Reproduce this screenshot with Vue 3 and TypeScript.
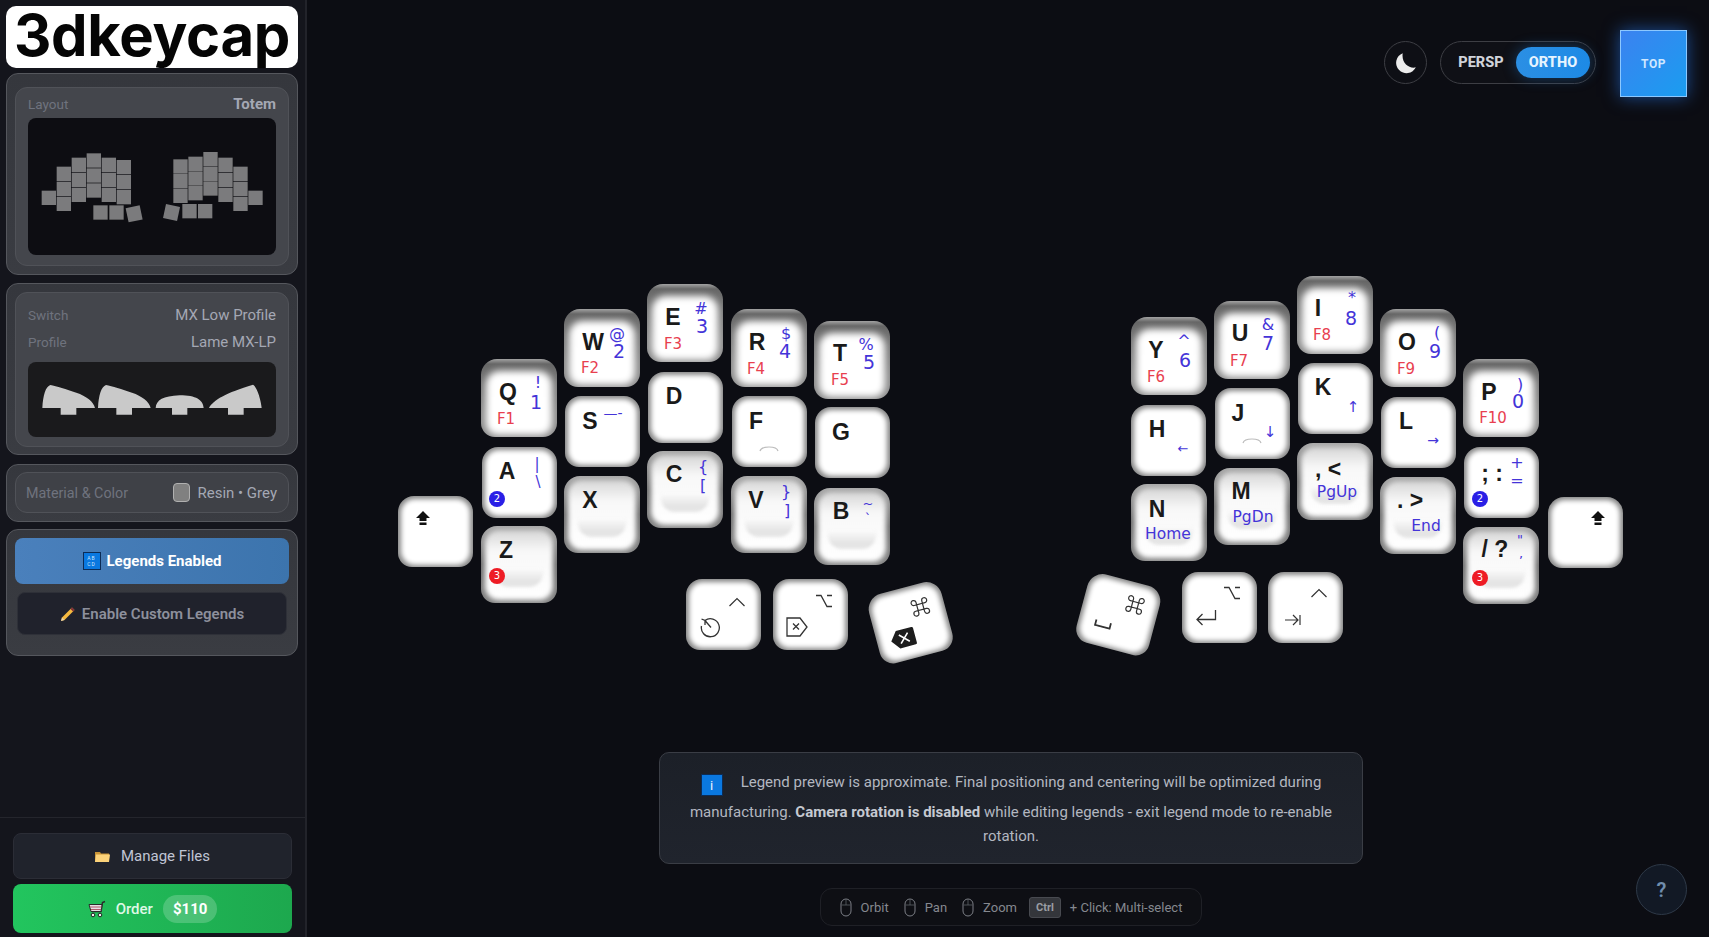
<script setup lang="ts">
type Legend = { t?: string, x: number, y: number, s?: number, c?: 'blue' | 'red' | 'black', b?: boolean, badge?: string, icon?: string }
type Key = { x: number, y: number, w: number, h: number, kind: string, rot?: number, legends: Legend[] }

// page coords for everything on the board, legends get converted to key-local below
const top = (x: number, y: number, main: [string, number, number], sym: [string, number, number], num: [string, number, number], f: [string, number, number]): Key => ({
  x, y, w: 76, h: 78, kind: 'top',
  legends: [
    { t: main[0], x: main[1], y: main[2], s: 23, b: true },
    { t: sym[0], x: sym[1], y: sym[2], s: 16, c: 'blue' },
    { t: num[0], x: num[1], y: num[2], s: 19, c: 'blue' },
    { t: f[0], x: f[1], y: f[2], s: 15, c: 'red' },
  ],
})
const mid = (x: number, y: number, legends: Legend[]): Key => ({ x, y, w: 75, h: 71, kind: 'mid', legends })
const bot = (x: number, y: number, legends: Legend[]): Key => ({ x, y, w: 76, h: 77, kind: 'bot', legends })
const main = (t: string, x: number, y: number): Legend => ({ t, x, y, s: 23, b: true })
const sub = (t: string, x: number, y: number, s = 15): Legend => ({ t, x, y, s, c: 'blue' })

const keys: Key[] = [
  mid(398, 496, [{ icon: 'shift', x: 423, y: 518 }]),
  top(481, 359, ['Q', 508, 392], ['!', 538, 383], ['1', 536, 402], ['F1', 506, 419]),
  mid(482, 447, [main('A', 507, 471), sub('|', 537, 464, 15), sub('\\', 538, 482, 15), { badge: '2', x: 497, y: 499 }]),
  bot(481, 526, [main('Z', 506, 550), { badge: '3', x: 497, y: 576 }]),
  top(564, 309, ['W', 593, 342], ['@', 617, 334], ['2', 619, 351], ['F2', 590, 368]),
  mid(565, 396, [main('S', 590, 421), sub('—-', 613, 413, 14)]),
  bot(564, 476, [main('X', 590, 500)]),
  top(647, 284, ['E', 673, 317], ['#', 701, 309], ['3', 702, 326], ['F3', 673, 344]),
  mid(648, 372, [main('D', 674, 396)]),
  bot(647, 451, [main('C', 674, 474), sub('{', 703, 467, 16), sub('[', 703, 486, 16)]),
  top(731, 309, ['R', 757, 342], ['$', 786, 334], ['4', 785, 351], ['F4', 756, 369]),
  mid(732, 396, [main('F', 756, 421), { icon: 'bump', x: 769, y: 449 }]),
  bot(731, 476, [main('V', 756, 500), sub('}', 786, 492, 16), sub(']', 787, 511, 16)]),
  top(814, 321, ['T', 840, 353], ['%', 866, 345], ['5', 869, 362], ['F5', 840, 380]),
  mid(815, 407, [main('G', 841, 432)]),
  bot(814, 488, [main('B', 841, 511), sub('~', 868, 503, 13), sub('`', 868, 518, 13)]),
  mid(686, 579, [{ icon: 'ctrl', x: 737, y: 602 }, { icon: 'undo', x: 710, y: 627 }]),
  mid(773, 579, [{ icon: 'opt', x: 824, y: 601 }, { icon: 'del', x: 797, y: 627 }]),
  { ...mid(873, 587, [{ icon: 'cmd', x: 920, y: 607 }, { icon: 'delfill', x: 903, y: 638 }]), rot: -15 },

  { ...mid(1081, 579, [{ icon: 'cmd', x: 1135, y: 605 }, { icon: 'space', x: 1103, y: 624 }]), rot: 15 },
  mid(1182, 572, [{ icon: 'opt', x: 1232, y: 593 }, { icon: 'enter', x: 1206, y: 618 }]),
  mid(1268, 572, [{ icon: 'ctrl', x: 1319, y: 593 }, { icon: 'tab', x: 1293, y: 620 }]),
  top(1131, 317, ['Y', 1156, 350], ['^', 1184, 341], ['6', 1185, 360], ['F6', 1156, 377]),
  mid(1131, 405, [main('H', 1157, 429), sub('←', 1183, 448, 13)]),
  bot(1131, 484, [main('N', 1157, 509), sub('Home', 1168, 535, 15.5)]),
  top(1214, 301, ['U', 1240, 333], ['&', 1268, 325], ['7', 1268, 343], ['F7', 1239, 361]),
  mid(1215, 388, [main('J', 1238, 413), sub('↓', 1270, 432, 15), { icon: 'bump', x: 1252, y: 441 }]),
  bot(1214, 468, [main('M', 1241, 491), sub('PgDn', 1253, 518, 15.5)]),
  top(1297, 276, ['I', 1318, 308], ['*', 1352, 298], ['8', 1351, 318], ['F8', 1322, 335]),
  mid(1298, 363, [main('K', 1323, 387), sub('↑', 1353, 407, 15)]),
  bot(1297, 443, [main(', <', 1328, 469), sub('PgUp', 1337, 493, 15.5)]),
  top(1380, 309, ['O', 1407, 342], ['(', 1437, 333], ['9', 1435, 351], ['F9', 1406, 369]),
  mid(1381, 397, [main('L', 1406, 421), sub('→', 1433, 440, 14)]),
  bot(1380, 477, [main('. >', 1410, 500), sub('End', 1426, 527, 15.5)]),
  top(1463, 359, ['P', 1489, 392], [')', 1520, 385], ['0', 1518, 401], ['F10', 1493, 418]),
  mid(1464, 447, [main('; :', 1492, 473), sub('+', 1517, 463, 16), sub('=', 1517, 481, 16), { badge: '2', x: 1480, y: 499 }]),
  bot(1463, 527, [main('/ ?', 1495, 549), sub('"', 1520, 539, 13), sub(',', 1521, 553, 13), { badge: '3', x: 1480, y: 578 }]),
  mid(1548, 497, [{ icon: 'shift', x: 1598, y: 518 }]),
]

// rotated keys: legends were measured on the page, so undo the rotation around the key centre
const legendStyle = (k: Key, l: Legend) => {
  let dx = l.x - (k.x + k.w / 2)
  let dy = l.y - (k.y + k.h / 2)
  if (k.rot) {
    const a = -k.rot * Math.PI / 180
    const nx = dx * Math.cos(a) - dy * Math.sin(a)
    dy = dx * Math.sin(a) + dy * Math.cos(a)
    dx = nx
  }
  return { left: `${k.w / 2 + dx}px`, top: `${k.h / 2 + dy}px`, fontSize: l.s ? `${l.s}px` : undefined }
}

const keyStyle = (k: Key) => ({
  left: `${k.x}px`, top: `${k.y}px`, width: `${k.w}px`, height: `${k.h}px`,
  transform: k.rot ? `rotate(${k.rot}deg)` : undefined,
})

// mini layout, measured at 3x
const miniCols: [number, number[]][] = [
  [125, [572]], [170, [500, 545, 590]], [215, [473, 518, 563]], [260, [460, 505, 550]], [305, [473, 518, 563]], [350, [480, 525, 570]],
  [520, [478, 522, 566]], [565, [470, 514, 558]], [610, [456, 500, 544]], [655, [473, 518, 563]], [700, [500, 545, 590]], [745, [572]],
  [280, [616]], [328, [616]], [547, [612]], [594, [612]],
]
const miniRects = miniCols.flatMap(([x, ys]) => ys.map(y => ({ x, y })))

const hints = ['Orbit', 'Pan', 'Zoom']
</script>

<template>
  <div class="app">
    <aside class="sidebar">
      <div class="top-area">
        <div class="logo">3dkeycap</div>

        <section class="panel layout-panel">
          <div class="inner">
            <div class="row"><span class="label">Layout</span><span class="value strong">Totem</span></div>
            <div class="preview dark">
              <svg width="248" height="137" viewBox="84 354 744 411">
                <rect v-for="r in miniRects" :key="`${r.x}-${r.y}`" :x="r.x" :y="r.y" width="43" height="43" fill="#7b7b7d" />
                <rect x="381" y="620" width="43" height="43" fill="#7b7b7d" transform="rotate(-12 403 642)" />
                <rect x="493" y="616" width="43" height="43" fill="#7b7b7d" transform="rotate(12 514 638)" />
              </svg>
            </div>
          </div>
        </section>

        <section class="panel profile-panel">
          <div class="inner">
            <div class="row"><span class="label">Switch</span><span class="value">MX Low Profile</span></div>
            <div class="row second"><span class="label">Profile</span><span class="value">Lame MX-LP</span></div>
            <div class="preview profile">
              <svg width="248" height="75" viewBox="25 36 744 225">
                <g fill="#c9c9c9">
                  <path d="M68 174C70 135 78 110 92 105C110 108 140 118 170 128C200 138 222 155 226 174H170V194H123V174Z" />
                  <path d="M235 174C237 135 245 110 259 105C277 108 307 118 337 128C367 138 389 155 393 174H337V194H290V174Z" />
                  <path d="M408 174C410 150 430 138 480 136C530 136 550 150 552 174H503V194H457V174Z" />
                  <path d="M568 174C580 150 620 128 700 104C712 110 724 150 726 174H672V194H625V174Z" />
                </g>
              </svg>
            </div>
          </div>
        </section>

        <section class="panel material-panel">
          <div class="inner slim">
            <span class="label mat-label">Material &amp; Color</span>
            <span class="material"><i class="swatch"></i>Resin • Grey</span>
          </div>
        </section>

        <section class="panel legends-panel">
          <button class="btn-blue">
            <span class="abcd"><b>AB</b><b>CD</b></span>Legends Enabled
          </button>
          <button class="btn-dark">
            <svg width="16" height="16" viewBox="0 0 16 16">
              <path d="M12 1.5l2.5 2.5L4.5 14 1 15l1-3.5z" fill="#f5b93f" />
              <path d="M12 1.5l2.5 2.5-1.5 1.5L10.500 3z" fill="#7a2b3a" />
              <path d="M1 15l1-3.500 2.500 2.500z" fill="#e8d5b0" />
            </svg>
            Enable Custom Legends
          </button>
        </section>
      </div>

      <div class="footer">
        <button class="btn-files">
          <svg width="15" height="13" viewBox="0 0 15 13">
            <path d="M0 2h5l1 1.500h8v8.500H0z" fill="#c99436" />
            <path d="M1 4.500h14l-1 7.500H0z" fill="#fbd27a" />
          </svg>
          Manage Files
        </button>
        <button class="btn-order">
          <svg width="18" height="18" viewBox="0 0 18 18">
            <path d="M17 1.500l-2.500 1-1.500 9H4" fill="none" stroke="#2b2b2b" stroke-width="1.500" />
            <path d="M1 4.500h13l-1 7H3z" fill="#e6dfe6" stroke="#2b2b2b" />
            <path d="M2 7h11.500M3 9.500h10" stroke="#b05a6a" stroke-width="1" />
            <circle cx="5" cy="15" r="1.800" fill="#eee" stroke="#222" />
            <circle cx="12" cy="15" r="1.800" fill="#eee" stroke="#222" />
          </svg>
          <span>Order</span>
          <span class="price">$110</span>
        </button>
      </div>
    </aside>

    <main class="stage">
      <div class="board">
        <div v-for="(k, i) in keys" :key="i" class="key" :class="k.kind" :style="keyStyle(k)">
          <i v-if="k.kind === 'bot'" class="dish"></i>
          <template v-for="(l, j) in k.legends" :key="j">
            <span v-if="l.t" class="legend" :class="[l.c || 'black', { bold: l.b }]" :style="legendStyle(k, l)">{{ l.t }}</span>
            <span v-else-if="l.badge" class="legend badge" :class="l.badge === '2' ? 'b2' : 'b3'" :style="legendStyle(k, l)">{{ l.badge }}</span>
            <span v-else class="legend" :style="legendStyle(k, l)">
              <svg v-if="l.icon === 'shift'" width="16" height="16" viewBox="0 0 16 16"><path d="M8 1l7 7h-3.500v3h-7V8H1z" fill="#111" /><rect x="4.500" y="12.500" width="7" height="2.500" fill="#111" /></svg>
              <svg v-else-if="l.icon === 'bump'" width="20" height="6" viewBox="0 0 20 6"><path d="M1 5Q2 1 10 1T19 5" fill="none" stroke="#bdbdbd" stroke-width="1.200" /></svg>
              <svg v-else-if="l.icon === 'ctrl'" width="18" height="10" viewBox="0 0 18 10"><path d="M1.500 9L9 1.500 16.500 9" fill="none" stroke="#333" stroke-width="1.200" /></svg>
              <svg v-else-if="l.icon === 'opt'" width="18" height="14" viewBox="0 0 18 14"><path d="M1 1.500h5L12 12.500h5M12 1.500h5" fill="none" stroke="#333" stroke-width="1.300" /></svg>
              <svg v-else-if="l.icon === 'undo'" width="22" height="22" viewBox="0 0 22 22"><path d="M6 4.500a9 9 0 1 1-3.500 5.500M2.500 3l3.500 1.500V9M6 4.500l6 7" fill="none" stroke="#333" stroke-width="1.300" /></svg>
              <svg v-else-if="l.icon === 'del'" width="24" height="22" viewBox="0 0 24 22"><path d="M2 2h13l7 9-7 9H2zM8 7.500l6 6M14 7.500l-6 6" fill="none" stroke="#333" stroke-width="1.300" /></svg>
              <svg v-else-if="l.icon === 'cmd'" width="20" height="20" viewBox="0 0 20 20"><path d="M7 7h6v6H7zM7 7H4.500A2.500 2.500 0 1 1 7 4.500zM13 7V4.500A2.500 2.500 0 1 1 15.500 7zM13 13h2.500A2.500 2.500 0 1 1 13 15.500zM7 13v2.500A2.500 2.500 0 1 1 4.500 13z" fill="none" stroke="#333" stroke-width="1.200" /></svg>
              <svg v-else-if="l.icon === 'delfill'" width="28" height="22" viewBox="0 0 28 22"><path d="M2 11L9 2H25a1.500 1.500 0 0 1 1.500 1.500V18.500A1.500 1.500 0 0 1 25 20H9z" fill="#1d1d1d" /><path d="M11 6.500l9 9M20 6.500l-9 9" stroke="#fff" stroke-width="1.600" /></svg>
              <svg v-else-if="l.icon === 'space'" width="18" height="8" viewBox="0 0 18 8"><path d="M1.500 1v5.500h15V1" fill="none" stroke="#333" stroke-width="1.800" /></svg>
              <svg v-else-if="l.icon === 'enter'" width="22" height="18" viewBox="0 0 22 18"><path d="M20.500 1v9.500H2M7.500 5l-5.500 5.500L7.500 16" fill="none" stroke="#333" stroke-width="1.300" /></svg>
              <svg v-else-if="l.icon === 'tab'" width="16" height="12" viewBox="0 0 16 12"><path d="M0 6h13M8 1l5 5-5 5M15 1v10" fill="none" stroke="#333" stroke-width="1.200" /></svg>
            </span>
          </template>
        </div>
      </div>

      <div class="top-tools">
        <button class="moon">
          <svg width="24" height="24" viewBox="0 0 22 22"><path d="M8 2A9.500 9.500 0 1 0 20 15C14 16.500 6.500 11 8 2z" fill="#ececec" /></svg>
        </button>
        <div class="cam">
          <span class="cam-item">PERSP</span>
          <span class="cam-item on">ORTHO</span>
        </div>
        <button class="view-top">TOP</button>
      </div>

      <div class="info">
        <span class="info-i">i</span>Legend preview is approximate. Final positioning and centering will be optimized during manufacturing. <strong>Camera rotation is disabled</strong> while editing legends - exit legend mode to re-enable rotation.
      </div>

      <div class="hints">
        <span v-for="h in hints" :key="h" class="hint">
          <svg width="12" height="19" viewBox="0 0 12 19"><rect x="1" y="1" width="10" height="17" rx="5" fill="none" stroke="#7c7f86" /><path d="M1.500 7H10.500M6 1v6" stroke="#5c5f66" stroke-width=".8" /></svg>
          {{ h }}
        </span>
        <kbd>Ctrl</kbd>
        <span>+ Click: Multi-select</span>
      </div>

      <button class="help">?</button>
    </main>
  </div>
</template>

<style scoped>
.app {
  display: flex;
  width: 1709px;
  height: 937px;
  overflow: hidden;
  font-family: Roboto, "Liberation Sans", sans-serif;
  background: #0c0d13;
}
.sidebar {
  width: 307px;
  box-sizing: border-box;
  flex: none;
  display: flex;
  flex-direction: column;
  justify-content: space-between;
  background: #14151c;
  border-right: 2px solid #22232a;
}
.top-area {
  display: flex;
  flex-direction: column;
  padding: 6px 7px 0 6px;
  gap: 8px;
}
.logo {
  height: 62px;
  background: #fff;
  border-radius: 10px;
  color: #050505;
  font: 700 58px/58px Inter, sans-serif;
  text-align: center;
  letter-spacing: -0.3px;
  margin-bottom: -3px;
}
.panel {
  box-sizing: border-box;
  background: linear-gradient(180deg, #35373d, #3a3c42);
  border: 1px solid #55575d;
  border-radius: 12px;
  padding: 8px;
}
.inner {
  box-sizing: border-box;
  background: #44464c;
  border: 1px solid #505258;
  border-radius: 12px;
  padding: 8px 12px;
}
.layout-panel { height: 202px; padding: 13px 8px 8px; }
.profile-panel { height: 172px; }
.material-panel { height: 58px; margin-top: 1px; padding-top: 7px; }
.legends-panel { margin-top: -1px; }
.layout-panel .inner { height: 179px; }
.profile-panel .inner { height: 155px; padding-top: 13px; }
.row {
  display: flex;
  justify-content: space-between;
  align-items: center;
  height: 16px;
}
.profile-panel .row { height: 18px; }
.row.second { margin-top: 9px; }
.label {
  color: #6f737e;
  font-size: 13.500px;
}
.mat-label { font-size: 14.300px; }
.value {
  color: #a4a8b4;
  font-size: 15px;
}
.value.strong { font-weight: 700; }
.preview {
  border-radius: 8px;
  overflow: hidden;
  display: block;
}
.preview svg { display: block; }
.preview.dark { background: #0d0d12; height: 137px; margin-top: 6px; }
.preview.profile { background: #1a1a1c; height: 75px; margin-top: 11px; }
.inner.slim {
  height: 41px;
  padding: 0 11px 0 10px;
  display: flex;
  justify-content: space-between;
  align-items: center;
  background: #3f4147;
}
.material {
  display: flex;
  align-items: center;
  gap: 8px;
  color: #a4a8b4;
  font-size: 15px;
}
.swatch {
  width: 17px;
  height: 19px;
  box-sizing: border-box;
  background: #808080;
  border: 1px solid #b0b0b0;
  border-radius: 4px;
}
.legends-panel {
  height: 127px;
  display: flex;
  flex-direction: column;
  padding: 8px;
}
button {
  font-family: inherit;
  border: 0;
  cursor: pointer;
}
.btn-blue {
  height: 46px;
  flex: none;
  display: flex;
  justify-content: center;
  align-items: center;
  gap: 6px;
  background: linear-gradient(90deg, #4a80bc, #3c74ad);
  border-radius: 8px;
  color: #fff;
  font-size: 15px;
  font-weight: 700;
}
.abcd {
  width: 16px;
  height: 16px;
  background: #0a78e0;
  border: 1px solid #0c2c56;
  display: grid;
  place-content: center;
  line-height: 6px;
}
.abcd b {
  display: block;
  font-size: 5px;
  font-weight: 400;
  letter-spacing: 1px;
  color: #cfe6ff;
}
.btn-dark {
  height: 43px;
  flex: none;
  margin: 8px 2px 0;
  display: flex;
  justify-content: center;
  align-items: center;
  gap: 6px;
  background: #20222c;
  border: 1px solid #2e3038;
  border-radius: 8px;
  color: #8d909c;
  font-size: 15px;
  font-weight: 600;
}
.footer {
  border-top: 1px solid #24252c;
  padding: 15px 13px 4px;
  display: flex;
  flex-direction: column;
  gap: 5px;
}
.btn-files {
  height: 46px;
  display: flex;
  justify-content: center;
  align-items: center;
  gap: 11px;
  background: #20232c;
  border: 1px solid #2b2d36;
  border-radius: 8px;
  color: #c0c5d4;
  font-size: 15px;
}
.btn-order {
  height: 49px;
  display: flex;
  justify-content: center;
  align-items: center;
  gap: 10px;
  background: linear-gradient(90deg, #22c55e, #1da84e);
  border-radius: 8px;
  color: #dff8e6;
  font-size: 15px;
  font-weight: 500;
}
.price {
  background: rgba(255, 255, 255, 0.2);
  border-radius: 14px;
  color: #fff;
  font-weight: 700;
  padding: 5px 10px;
}
.stage {
  flex: 1;
  position: relative;
}
.board {
  position: absolute;
  left: -307px;
  top: 0;
  width: 1709px;
  height: 937px;
}
.key {
  position: absolute;
  border-radius: 16px 16px 14px 14px;
  overflow: hidden;
  background: #858585;
}
.key::before {
  content: '';
  position: absolute;
  inset: 3px 3px 2px;
  border-radius: 14px;
  background: #fff;
  filter: blur(2.500px);
}
.key.top {
  background: linear-gradient(180deg, #a2a2a2 0, #666 5px, #707070 14px, #8a8a8a 70%);
}
.key.top::before {
  inset: 12px 5px 2px;
  border-radius: 14px 14px 12px 12px;
  filter: blur(3.500px);
}
.key.bot {
  background: linear-gradient(180deg, #a8a8a8, #6f6f6f 50%, #858585);
}
.key.bot::before {
  inset: 4px 4px 3px;
  background: linear-gradient(180deg, #d6d6d6 0, #f8f8f8 30%, #fff 100%);
}
.dish {
  position: absolute;
  left: 14px;
  right: 14px;
  top: 42px;
  height: 19px;
  border-radius: 4px 4px 14px 14px;
  background: linear-gradient(180deg, #fbfbfb, #e4e4e4 70%, #e6e6e6);
  filter: blur(1.500px);
}
.legend {
  position: absolute;
  transform: translate(-50%, -50%);
  white-space: nowrap;
  font-family: "DejaVu Sans", sans-serif;
  line-height: 1;
  display: flex;
}
.legend.bold {
  font-family: "Liberation Sans", sans-serif;
  font-weight: 700;
  color: #1a1a1a;
}
.legend.blue { color: #4434d8; }
.legend.red { color: #e8404f; }
.badge {
  width: 16px;
  height: 16px;
  border-radius: 50%;
  color: #fff;
  font-size: 10px;
  align-items: center;
  justify-content: center;
}
.badge.b2 { background: #2a1fe6; }
.badge.b3 { background: #ee1c25; }
.top-tools {
  position: absolute;
  right: 22px;
  top: 30px;
  display: flex;
  align-items: flex-start;
}
.moon {
  width: 43px;
  height: 43px;
  margin-top: 11px;
  border-radius: 50%;
  background: #0e0f15;
  border: 1px solid #3d3e44;
  display: grid;
  place-items: center;
  padding: 0;
}
.cam {
  width: 156px;
  height: 43px;
  margin: 11px 24px 0 13px;
  border-radius: 22px;
  border: 1px solid #3d3e44;
  background: #0f1016;
  display: flex;
  align-items: center;
  justify-content: flex-end;
  padding: 0 5px;
  box-sizing: border-box;
}
.cam-item {
  flex: none;
  width: 70px;
  height: 31px;
  border-radius: 16px;
  display: flex;
  align-items: center;
  justify-content: center;
  color: #d0d3da;
  font-size: 14.500px;
  font-weight: 800;
}
.cam-item.on {
  width: 74px;
  background: linear-gradient(90deg, #2b8fe4, #1d8ae6);
  color: #e6f4ff;
  box-shadow: 0 0 14px rgba(33, 140, 240, 0.35);
}
.view-top {
  width: 67px;
  height: 67px;
  background: linear-gradient(135deg, #3b82f0, #1a9df0);
  border: 1px solid #8cc8ff;
  box-shadow: 0 0 16px rgba(40, 130, 255, 0.55);
  color: #cfe7ff;
  font-size: 12px;
  font-weight: 700;
  letter-spacing: 0.5px;
  padding: 0;
}
.info {
  position: absolute;
  left: 352px;
  top: 752px;
  width: 704px;
  height: 112px;
  box-sizing: border-box;
  padding: 17px 24px;
  background: linear-gradient(180deg, #1c2028, #20242d);
  border: 1px solid #3a3d45;
  border-radius: 10px;
  color: #b3b7c0;
  font-size: 15px;
  line-height: 24.200px;
  text-align: center;
}
.info strong { font-weight: 700; color: #c5c9d1; }
.info-i {
  display: inline-block;
  width: 22px;
  height: 22px;
  line-height: 21px;
  background: #0a78e0;
  border: 1px solid #0c2c56;
  box-sizing: border-box;
  color: #eaf4ff;
  font-size: 13px;
  margin: 0 18px 4px 0;
  vertical-align: -3px;
}
.hints {
  position: absolute;
  left: 513px;
  top: 888px;
  width: 382px;
  height: 38px;
  box-sizing: border-box;
  display: flex;
  align-items: center;
  justify-content: center;
  gap: 15px;
  border: 1px solid #1f2026;
  border-radius: 12px;
  background: #0e0f14;
  color: #85888f;
  font-size: 13px;
}
.hint {
  display: flex;
  align-items: center;
  gap: 9px;
}
kbd {
  font-family: inherit;
  font-size: 11px;
  font-weight: 700;
  background: #34363b;
  border: 1px solid #484a50;
  border-radius: 3px;
  padding: 3px 6px;
  color: #9a9da3;
  margin: 0 -6px 0 -3px;
}
.help {
  position: absolute;
  right: 22px;
  bottom: 22px;
  width: 51px;
  height: 51px;
  border-radius: 50%;
  background: #121925;
  border: 1px solid #2e3948;
  color: #6f8dae;
  font-size: 20px;
  font-weight: 600;
  padding: 0;
}
</style>

<style>
html, body { margin: 0; background: #0c0d13; }
</style>
